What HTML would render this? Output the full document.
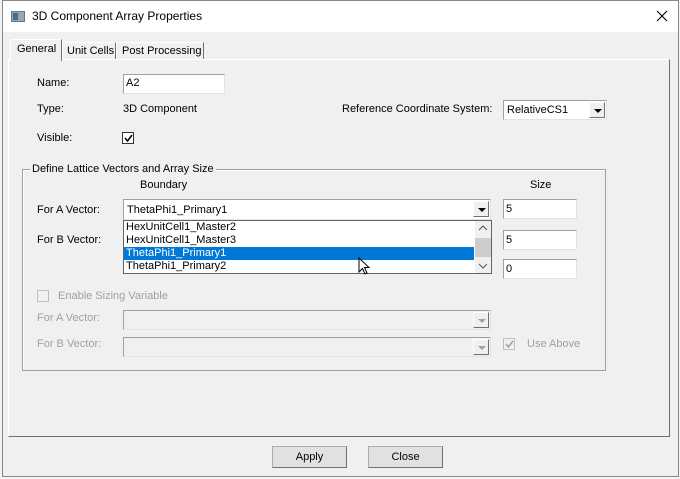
<!DOCTYPE html>
<html><head><style>
*{box-sizing:border-box;margin:0;padding:0}
body{width:680px;height:479px;background:#f4f4f8;font-family:"Liberation Sans",sans-serif;font-size:11px;color:#000;position:relative;overflow:hidden}
.a{position:absolute;white-space:nowrap}
.win{left:2px;top:0;width:677px;height:477px;background:#f0f0f0;border:1px solid #888}
.title{left:3px;top:1px;width:675px;height:31px;background:#fff}
.inp{background:#fff;border-top:1px solid #a0a0a0;border-left:1px solid #a0a0a0;border-right:1px solid #e3e3e3;border-bottom:1px solid #e3e3e3}
.dis{background:#f0f0f0}
.g{color:#a0a0a0}
.btn{background:#e1e1e1;border:1px solid #adadad;border-right-color:#707070;border-bottom-color:#707070;text-align:center;line-height:20px;font-size:11px}
.arr{width:16px;height:16px;background:#f0f0f0;border:1px solid #fff;border-right-color:#707070;border-bottom-color:#707070}
.tri{position:absolute;left:4px;top:6px;width:0;height:0;border-left:4px solid transparent;border-right:4px solid transparent;border-top:4px solid #000}
</style></head><body>
<div class="a win"></div>
<div class="a title"></div>
<div class="a" style="left:11px;top:11px;width:14px;height:11px;background:#9aa6b2;border:1px solid #6b7785"><div style="position:absolute;left:1px;top:1px;width:5px;height:7px;background:#3f6f8f"></div></div>
<div class="a" style="left:32px;top:9px;font-size:12px">3D Component Array Properties</div>
<svg class="a" style="left:656px;top:10px" width="12" height="12"><path d="M1 1L11 11M11 1L1 11" stroke="#000" stroke-width="1.1"/></svg>
<!-- tab panel -->
<div class="a" style="left:8px;top:59px;width:662px;height:378px;border:1px solid #fff;border-right-color:#707070;border-bottom-color:#707070"></div>
<div class="a" style="left:10px;top:39px;width:52px;height:22px;background:#f0f0f0;border:1px solid #fff;border-right-color:#707070;border-bottom:none;padding:3px 0 0 6px">General</div>
<div class="a" style="left:62px;top:42px;width:54px;height:17px;border:1px solid #fff;border-right-color:#707070;border-bottom:none;padding:2px 0 0 4px">Unit Cells</div>
<div class="a" style="left:116px;top:42px;width:88px;height:17px;border:1px solid #fff;border-right-color:#707070;border-bottom:none;padding:2px 0 0 5px">Post Processing</div>
<div class="a" style="left:37px;top:77px">Name:</div>
<div class="a inp" style="left:123px;top:74px;width:102px;height:20px;padding:2px 2px">A2</div>
<div class="a" style="left:37px;top:103px">Type:</div>
<div class="a" style="left:123px;top:103px">3D Component</div>
<div class="a" style="left:37px;top:132px">Visible:</div>
<div class="a" style="left:122px;top:132px;width:12px;height:12px;background:#fff;border:1px solid #333"><svg style="position:absolute;left:1px;top:1px" width="9" height="9"><path d="M1 4L3.5 7L8 1" stroke="#000" stroke-width="1.6" fill="none"/></svg></div>
<div class="a" style="left:342px;top:103px">Reference Coordinate System:</div>
<div class="a inp" style="left:503px;top:100px;width:104px;height:20px;padding:3px 3px">RelativeCS1</div>
<div class="a arr" style="left:589px;top:102px"><div class="tri"></div></div>
<!-- group -->
<div class="a" style="left:22px;top:169px;width:584px;height:202px;border:1px solid #a0a0a0;box-shadow:1px 1px 0 #fff inset"></div>
<div class="a" style="left:30px;top:163px;background:#f0f0f0;padding:0 2px">Define Lattice Vectors and Array Size</div>
<div class="a" style="left:140px;top:179px">Boundary</div>
<div class="a" style="left:530px;top:179px">Size</div>
<div class="a" style="left:37px;top:204px">For A Vector:</div>
<div class="a" style="left:37px;top:234px">For B Vector:</div>
<div class="a inp" style="left:123px;top:199px;width:368px;height:21px;padding:4px 3px">ThetaPhi1_Primary1</div>
<div class="a arr" style="left:473px;top:201px"><div class="tri"></div></div>
<div class="a" style="left:123px;top:220px;width:369px;height:54px;background:#fff;border:1px solid #646464"></div>
<div class="a" style="left:126px;top:221px;line-height:13px">HexUnitCell1_Master2<br>HexUnitCell1_Master3</div>
<div class="a" style="left:124px;top:247px;width:350px;height:13px;background:#0078d7"></div>
<div class="a" style="left:126px;top:247px;line-height:13px;color:#fff">ThetaPhi1_Primary1</div>
<div class="a" style="left:126px;top:260px;line-height:13px">ThetaPhi1_Primary2</div>
<div class="a" style="left:475px;top:221px;width:16px;height:52px;background:#f0f0f0"></div>
<div class="a" style="left:475px;top:238px;width:16px;height:19px;background:#cdcdcd"></div>
<svg class="a" style="left:478px;top:225px" width="10" height="6"><path d="M1 5L5 1L9 5" stroke="#555" fill="none"/></svg>
<svg class="a" style="left:478px;top:263px" width="10" height="6"><path d="M1 1L5 5L9 1" stroke="#555" fill="none"/></svg>
<svg class="a" style="left:358px;top:257px" width="14" height="20"><path d="M1 1L1 15L4.5 11.5L7 17L9 16L6.5 10.5L11 10.5Z" fill="#fff" stroke="#000"/></svg>
<div class="a inp" style="left:503px;top:199px;width:74px;height:20px;padding:3px 2px">5</div>
<div class="a inp" style="left:503px;top:230px;width:74px;height:20px;padding:3px 2px">5</div>
<div class="a inp" style="left:503px;top:259px;width:74px;height:20px;padding:3px 2px">0</div>
<div class="a" style="left:37px;top:290px;width:12px;height:12px;border:1px solid #c0c0c0;background:#f0f0f0"></div>
<div class="a g" style="left:58px;top:290px">Enable Sizing Variable</div>
<div class="a g" style="left:37px;top:312px">For A Vector:</div>
<div class="a g" style="left:37px;top:338px">For B Vector:</div>
<div class="a inp dis" style="left:123px;top:310px;width:368px;height:20px"></div>
<div class="a arr" style="left:473px;top:312px"><div class="tri" style="border-top-color:#a0a0a0"></div></div>
<div class="a inp dis" style="left:123px;top:337px;width:368px;height:20px"></div>
<div class="a arr" style="left:473px;top:339px"><div class="tri" style="border-top-color:#a0a0a0"></div></div>
<div class="a" style="left:503px;top:338px;width:12px;height:12px;border:1px solid #c0c0c0"><svg style="position:absolute;left:1px;top:1px" width="9" height="9"><path d="M1 4L3.5 7L8 1" stroke="#a0a0a0" stroke-width="1.6" fill="none"/></svg></div>
<div class="a g" style="left:527px;top:338px">Use Above</div>
<div class="a btn" style="left:272px;top:446px;width:75px;height:22px">Apply</div>
<div class="a btn" style="left:368px;top:446px;width:75px;height:22px">Close</div>
</body></html>
